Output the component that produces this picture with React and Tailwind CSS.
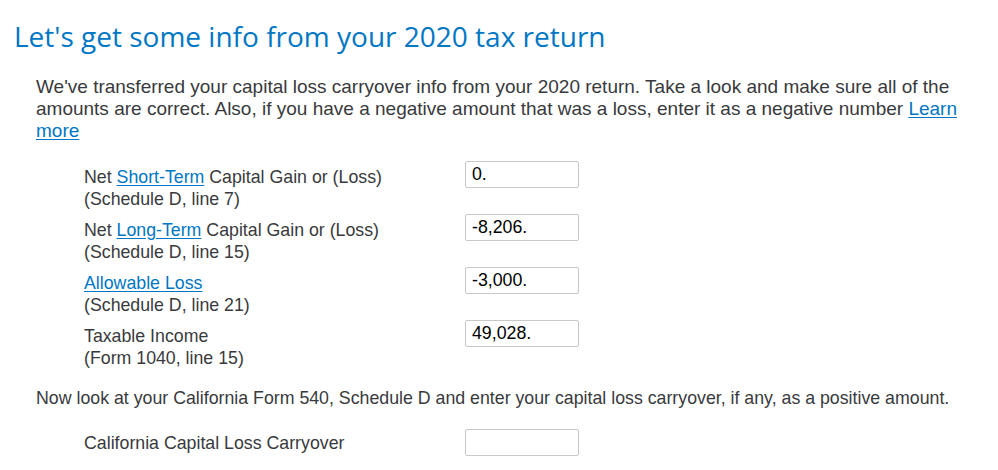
const rows = [
  { pre: 'Net ', link: 'Short-Term', post: ' Capital Gain or (Loss)', sub: '(Schedule D, line 7)', value: '0.' },
  { pre: 'Net ', link: 'Long-Term', post: ' Capital Gain or (Loss)', sub: '(Schedule D, line 15)', value: '-8,206.' },
  { pre: '', link: 'Allowable Loss', post: '', sub: '(Schedule D, line 21)', value: '-3,000.' },
  { pre: 'Taxable Income', link: '', post: '', sub: '(Form 1040, line 15)', value: '49,028.' },
]

function Link({ children }) {
  return <a href="#" className="text-[#0077c5] underline underline-offset-2">{children}</a>
}

function AmountInput({ value }) {
  return (
    <input
      type="text"
      defaultValue={value}
      className="h-[27px] w-[114px] rounded-[2px] border border-[#c8c8c8] px-[6px] text-[17.75px] text-black outline-none"
    />
  )
}

export default function App() {
  return (
    <div className="min-h-[470px] bg-white font-['Liberation_Sans',Arial,sans-serif] text-[#393a3d]">
      <h1 className="pl-[14px] pt-[18px] font-['Open_Sans',sans-serif] text-[28px] leading-[36px] text-[#0077c5]">
        Let's get some info from your 2020 tax return
      </h1>

      <div className="pl-[36px] pr-[30px] pt-[22px]">
        <p className="text-[19px] leading-[22px]">
          We've transferred your capital loss carryover info from your 2020 return. Take a look and make sure all of the
          amounts are correct. Also, if you have a negative amount that was a loss, enter it as a negative number{' '}
          <Link>Learn more</Link>
        </p>

        <div className="mt-[19px] flex flex-col gap-[4px] pl-[48px]">
          {rows.map((r) => (
            <div key={r.sub} className="flex items-start">
              <div className="w-[381px] pt-[5px] text-[17.75px] leading-[22px]">
                <div>
                  {r.pre}
                  {r.link ? <Link>{r.link}</Link> : null}
                  {r.post}
                </div>
                <div>{r.sub}</div>
              </div>
              <AmountInput value={r.value} />
            </div>
          ))}
        </div>

        <p className="mt-[18px] text-[17.75px] leading-[22px]">
          Now look at your California Form 540, Schedule D and enter your capital loss carryover, if any, as a positive amount.
        </p>

        <div className="mt-[20px] flex items-center pl-[48px]">
          <div className="w-[381px] text-[17.75px] leading-[22px]">California Capital Loss Carryover</div>
          <AmountInput value="" />
        </div>
      </div>
    </div>
  )
}
